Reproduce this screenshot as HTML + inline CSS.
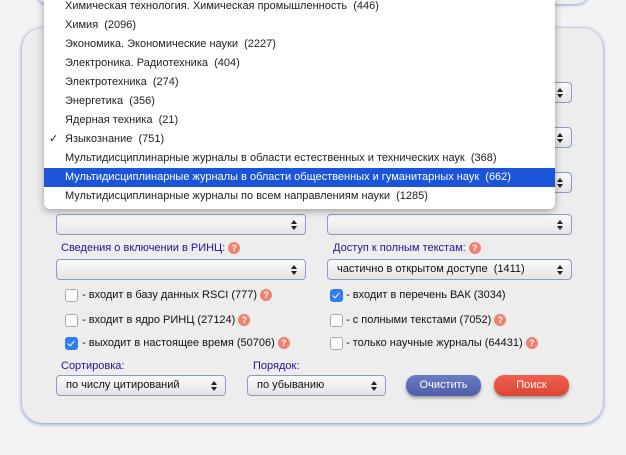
<!DOCTYPE html>
<html><head><meta charset="utf-8"><style>
body{margin:0;width:626px;height:455px;background:#f3f3f3;font-family:"Liberation Sans",Arial,sans-serif;font-size:11px;position:relative;overflow:hidden;color:#111}
.abs{position:absolute}
.top{left:35px;top:-30px;width:555px;height:34px;border-radius:14px;background:#eee;box-shadow:0 1px 3px #8a96d8}
.panel{left:22px;top:28px;width:581px;height:395px;border-radius:20px;background:#ededed;box-shadow:0 1px 4px #7f8fd6,0 0 1px #8f9ce0}
.sel{height:19px;border:1px solid #8c9ac9;border-radius:4px;background:linear-gradient(#fafafa,#e4e4e4);box-sizing:content-box}
.sel span{position:absolute;left:9px;top:3px;font-size:11px}
.sel:after{content:"";position:absolute;right:8px;top:5px;width:0;height:0;border-left:3px solid transparent;border-right:3px solid transparent;border-bottom:4px solid #222}
.sel:before{content:"";position:absolute;right:8px;top:11px;width:0;height:0;border-left:3px solid transparent;border-right:3px solid transparent;border-top:4px solid #222}
.lbl{color:#2a1290;font-size:11px}
.q{display:inline-block;width:12px;height:12px;border-radius:6px;background:#f08070;color:#fff;font-size:9px;font-weight:bold;text-align:center;line-height:12px;vertical-align:top;margin-left:3px}
.cb{width:11px;height:11px;border:1px solid #aaa;border-radius:3px;background:#fff}
.cb.on{background:#2f7ef0;border-color:#2f7ef0}
.cb.on:after{content:"";position:absolute;left:3px;top:1px;width:3px;height:6px;border:solid #fff;border-width:0 1.5px 1.5px 0;transform:rotate(40deg)}
.ct{font-size:11px;line-height:13px}
.btn{height:21px;border-radius:10px;color:#fff;text-align:center;line-height:21px;font-size:11px;box-shadow:0 2px 3px #999}
.dd{left:44px;top:-3px;width:511px;height:212px;background:#fff;border-radius:0 0 6px 6px;box-shadow:0 2px 8px rgba(0,0,0,.35)}
.it{position:absolute;left:0;width:511px;height:19px;line-height:19px;padding-left:21px;box-sizing:border-box;font-size:11px;color:#222}
.hl{background:#1b54d9;color:#fff}
</style></head><body>
<div class="abs top"></div>
<div class="abs panel"></div>

<div class="abs sel" style="left:327px;top:82px;width:243px"></div>
<div class="abs sel" style="left:327px;top:127px;width:243px"></div>
<div class="abs sel" style="left:327px;top:172px;width:243px"></div>

<div class="abs sel" style="left:56px;top:214px;width:248px"></div>
<div class="abs sel" style="left:327px;top:214px;width:243px"></div>

<div class="abs lbl" style="left:61px;top:242px;line-height:13px">Сведения о включении в РИНЦ:<span class="q">?</span></div>
<div class="abs lbl" style="left:333px;top:242px;line-height:13px">Доступ к полным текстам:<span class="q">?</span></div>
<div class="abs sel" style="left:56px;top:259px;width:248px"></div>
<div class="abs sel" style="left:327px;top:259px;width:243px"><span>частично в открытом доступе &nbsp;(1411)</span></div>

<div class="abs cb" style="left:65px;top:289px"></div><div class="abs ct" style="left:82px;top:289px">- входит в базу данных RSCI (777)<span class="q">?</span></div>
<div class="abs cb" style="left:65px;top:314px"></div><div class="abs ct" style="left:82px;top:314px">- входит в ядро РИНЦ (27124)<span class="q">?</span></div>
<div class="abs cb on" style="left:65px;top:337px"></div><div class="abs ct" style="left:82px;top:337px">- выходит в настоящее время (50706)<span class="q">?</span></div>
<div class="abs cb on" style="left:330px;top:289px"></div><div class="abs ct" style="left:346px;top:289px">- входит в перечень ВАК (3034)</div>
<div class="abs cb" style="left:330px;top:314px"></div><div class="abs ct" style="left:346px;top:314px">- с полными текстами (7052)<span class="q">?</span></div>
<div class="abs cb" style="left:330px;top:337px"></div><div class="abs ct" style="left:346px;top:337px">- только научные журналы (64431)<span class="q">?</span></div>

<div class="abs lbl" style="left:61px;top:360px">Сортировка:</div>
<div class="abs lbl" style="left:253px;top:360px">Порядок:</div>
<div class="abs sel" style="left:56px;top:375px;width:168px"><span>по числу цитирований</span></div>
<div class="abs sel" style="left:247px;top:375px;width:137px"><span>по убыванию</span></div>
<div class="abs btn" style="left:406px;top:375px;width:75px;background:linear-gradient(#6a7bc6,#4f5fa8)">Очистить</div>
<div class="abs btn" style="left:494px;top:375px;width:75px;background:linear-gradient(#f06050,#dc4535)">Поиск</div>

<div class="abs dd">
<div class="it" style="top:0">Химическая технология. Химическая промышленность &nbsp;(446)</div>
<div class="it" style="top:19px">Химия &nbsp;(2096)</div>
<div class="it" style="top:38px">Экономика. Экономические науки &nbsp;(2227)</div>
<div class="it" style="top:57px">Электроника. Радиотехника &nbsp;(404)</div>
<div class="it" style="top:76px">Электротехника &nbsp;(274)</div>
<div class="it" style="top:95px">Энергетика &nbsp;(356)</div>
<div class="it" style="top:114px">Ядерная техника &nbsp;(21)</div>
<div class="it" style="top:133px"><span style="position:absolute;left:5px">✓</span>Языкознание &nbsp;(751)</div>
<div class="it" style="top:152px">Мультидисциплинарные журналы в области естественных и технических наук &nbsp;(368)</div>
<div class="it hl" style="top:171px">Мультидисциплинарные журналы в области общественных и гуманитарных наук &nbsp;(662)</div>
<div class="it" style="top:190px">Мультидисциплинарные журналы по всем направлениям науки &nbsp;(1285)</div>
</div>
</body></html>
